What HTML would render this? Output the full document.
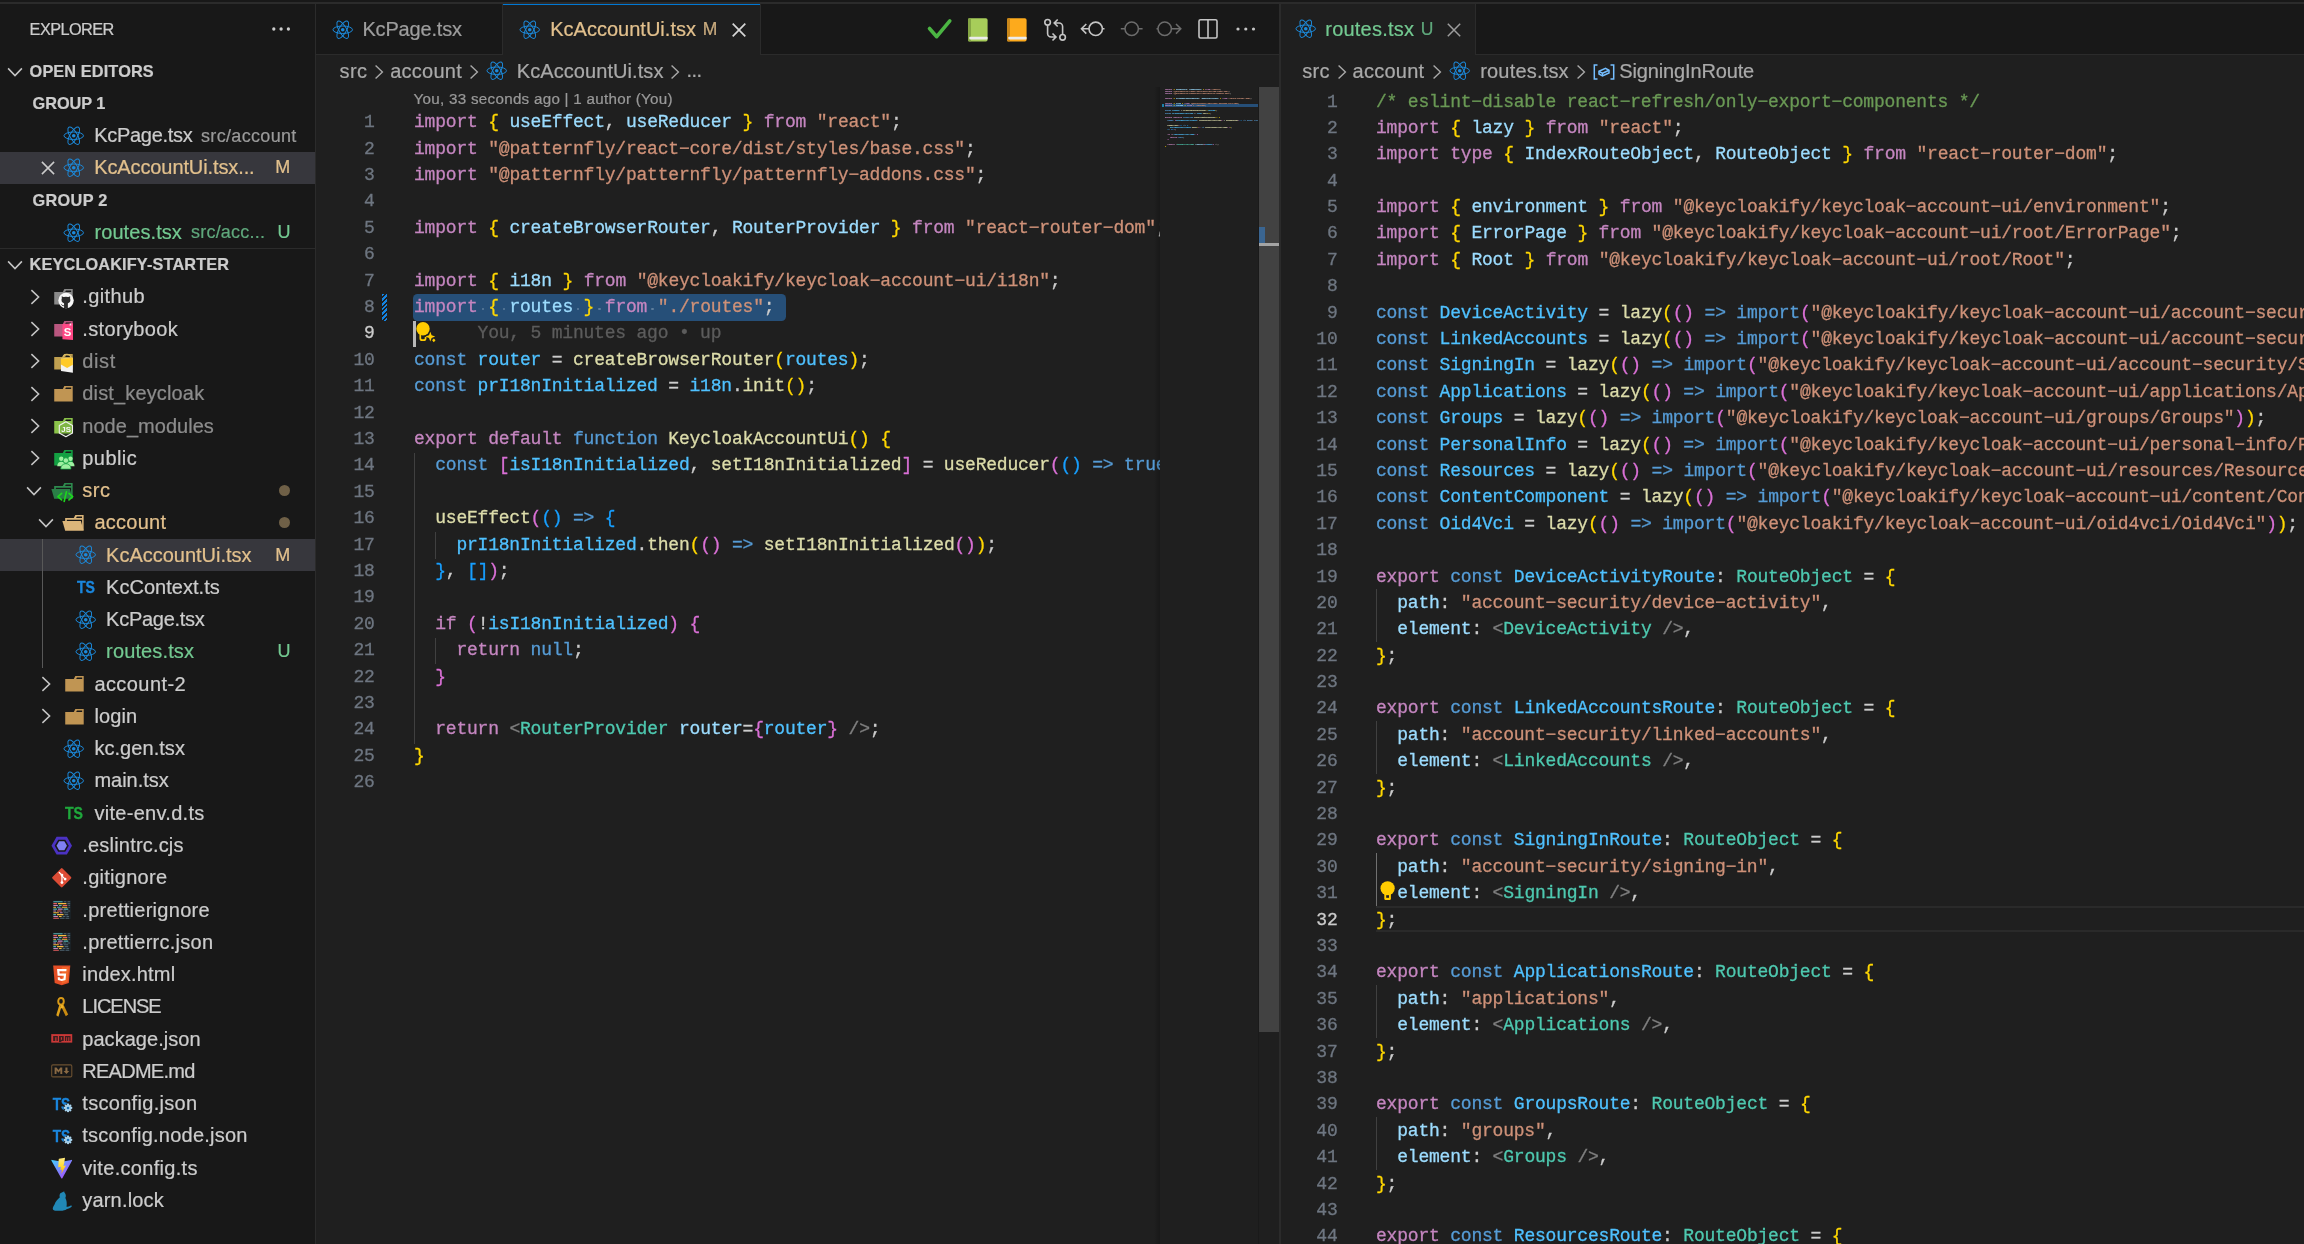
<!DOCTYPE html><html><head><meta charset="utf-8"><title>VS Code</title><style>
*{box-sizing:border-box;margin:0;padding:0}
html,body{width:2304px;height:1244px;overflow:hidden;background:#181818}
body{position:relative;font-family:"Liberation Sans",sans-serif;color:#cccccc;font-size:19px}
i{font-style:normal}
.abs{position:absolute}
.ic{position:absolute;display:block;overflow:visible}
.t{position:absolute;white-space:pre;line-height:32.267px;height:32.267px;-webkit-text-stroke:0.22px}
.b{font-weight:bold}
.code{position:absolute;font-family:"Liberation Mono",monospace;font-size:18px;line-height:26.4062px;white-space:pre;color:#cccccc;letter-spacing:-0.207px;-webkit-text-stroke:0.3px}
.code div{height:26.4062px}
.ln{position:absolute;font-family:"Liberation Mono",monospace;font-size:18px;line-height:26.4062px;text-align:right;color:#6e7681;white-space:pre;letter-spacing:-0.207px;-webkit-text-stroke:0.3px}
.ln div{height:26.4062px}
.ln .act{color:#cccccc}
.kw{color:#c586c0}.st{color:#569cd6}.var{color:#9cdcfe}.cst{color:#4fc1ff}.str{color:#ce9178}.fn{color:#dcdcaa}.type{color:#4ec9b0}.cmt{color:#6a9955}.b0{color:#ffd700}.b1{color:#da70d6}.b2{color:#179fff}.tag{color:#808080}.p{color:#cccccc}</style></head><body><div id="root" style="position:absolute;left:0;top:0;width:2304px;height:1244px;will-change:transform"><div class="abs" style="left:0.00px;top:0.00px;width:2304.00px;height:2.00px;background:#181818;"></div><div class="abs" style="left:0.00px;top:2.00px;width:2304.00px;height:1.50px;background:#2b2b2b;"></div><div class="abs" style="left:0.00px;top:3.50px;width:315.00px;height:1240.50px;background:#181818;"></div><div class="abs" style="left:315.00px;top:3.50px;width:1.00px;height:1240.50px;background:#2b2b2b;"></div><span class="t " id="s_explorer" style="left:29.60px;top:13.27px;font-size:16.30px;color:#cccccc;letter-spacing:-0.561px;">EXPLORER</span><svg class="ic" width="24" height="8" viewBox="0 0 24 8" style="left:270px;top:25.200px"><g fill="#cccccc"><circle cx="3.800" cy="4" r="1.650"/><circle cx="11.100" cy="4" r="1.650"/><circle cx="18.400" cy="4" r="1.650"/></g></svg><svg class="ic" width="24" height="24" viewBox="-12 -12 24 24" style="left:2.90px;top:59.73px"><path d="M-6.90 -3.60 L0.00 3.60 L6.90 -3.60" fill="none" stroke="#c5c5c5" stroke-width="1.55" stroke-linejoin="miter"/></svg><span class="t b" id="s_openeditors" style="left:29.60px;top:54.60px;font-size:16.30px;color:#cccccc;letter-spacing:0.121px;">OPEN EDITORS</span><span class="t b" id="s_group1" style="left:32.60px;top:86.87px;font-size:16.30px;color:#cccccc;letter-spacing:-0.029px;">GROUP 1</span><svg class="ic" viewBox="0 0 32 32" width="23.47" height="23.47" style="left:62.47px;top:123.73px"><g fill="none" stroke="#1c8adb" stroke-width="1.35"><ellipse cx="16" cy="16" rx="13.3" ry="5.1"/><ellipse cx="16" cy="16" rx="13.3" ry="5.1" transform="rotate(60 16 16)"/><ellipse cx="16" cy="16" rx="13.3" ry="5.1" transform="rotate(120 16 16)"/></g><circle cx="16" cy="16" r="2.5" fill="#1c8adb"/></svg><span class="t " id="s_oe_kcpage" style="left:94.20px;top:119.13px;font-size:20.00px;color:#cccccc;letter-spacing:-0.287px;">KcPage.tsx</span><span class="t " id="s_oe_kcpage_d" style="left:201.00px;top:119.63px;font-size:18.00px;color:#9a9a9a;letter-spacing:0.332px;">src/account</span><div class="abs" style="left:0.00px;top:151.60px;width:315.00px;height:32.27px;background:#37373d;"></div><svg class="ic" width="24" height="24" viewBox="-12 -12 24 24" style="left:35.60px;top:156.13px"><path d="M-6.1 -6.1L6.1 6.1M-6.1 6.1L6.1 -6.1" fill="none" stroke="#cccccc" stroke-width="1.50"/></svg><svg class="ic" viewBox="0 0 32 32" width="23.47" height="23.47" style="left:62.47px;top:156.00px"><g fill="none" stroke="#1c8adb" stroke-width="1.35"><ellipse cx="16" cy="16" rx="13.3" ry="5.1"/><ellipse cx="16" cy="16" rx="13.3" ry="5.1" transform="rotate(60 16 16)"/><ellipse cx="16" cy="16" rx="13.3" ry="5.1" transform="rotate(120 16 16)"/></g><circle cx="16" cy="16" r="2.5" fill="#1c8adb"/></svg><span class="t " id="s_oe_kcacc" style="left:94.20px;top:151.40px;font-size:20.00px;color:#e2c08d;letter-spacing:-0.105px;">KcAccountUi.tsx...</span><span class="t " id="s_oe_M" style="left:275.30px;top:151.40px;font-size:18.00px;color:#e2c08d;letter-spacing:0.800px;">M</span><span class="t b" id="s_group2" style="left:32.60px;top:183.67px;font-size:16.30px;color:#cccccc;letter-spacing:0.300px;">GROUP 2</span><svg class="ic" viewBox="0 0 32 32" width="23.47" height="23.47" style="left:62.47px;top:220.53px"><g fill="none" stroke="#1c8adb" stroke-width="1.35"><ellipse cx="16" cy="16" rx="13.3" ry="5.1"/><ellipse cx="16" cy="16" rx="13.3" ry="5.1" transform="rotate(60 16 16)"/><ellipse cx="16" cy="16" rx="13.3" ry="5.1" transform="rotate(120 16 16)"/></g><circle cx="16" cy="16" r="2.5" fill="#1c8adb"/></svg><span class="t " id="s_oe_routes" style="left:94.50px;top:215.94px;font-size:20.00px;color:#73c991;letter-spacing:0.070px;">routes.tsx</span><span class="t " id="s_oe_routes_d" style="left:191.00px;top:216.44px;font-size:18.00px;color:#5fa87c;letter-spacing:0.218px;">src/acc...</span><span class="t " id="s_oe_U" style="left:277.60px;top:215.94px;font-size:18.00px;color:#73c991;letter-spacing:0.500px;">U</span><div class="abs" style="left:0.00px;top:248.20px;width:315.00px;height:1.00px;background:#2b2b2b;"></div><svg class="ic" width="24" height="24" viewBox="-12 -12 24 24" style="left:2.90px;top:253.34px"><path d="M-6.90 -3.60 L0.00 3.60 L6.90 -3.60" fill="none" stroke="#c5c5c5" stroke-width="1.55" stroke-linejoin="miter"/></svg><span class="t b" id="s_proj" style="left:29.60px;top:248.20px;font-size:16.30px;color:#cccccc;letter-spacing:0.143px;">KEYCLOAKIFY-STARTER</span><svg class="ic" width="24" height="24" viewBox="-12 -12 24 24" style="left:22.50px;top:284.80px"><path d="M-3.60 -6.90 L3.60 0.00 L-3.60 6.90" fill="none" stroke="#c5c5c5" stroke-width="1.55" stroke-linejoin="miter"/></svg><svg class="ic" viewBox="0 0 32 32" width="23.47" height="23.47" style="left:50.77px;top:285.07px"><path d="M27.5,5.5H18.2L16.1,9.7H4.4V26.5H29.6V5.5Zm0,4.2H19.3l1.1-2.1h7.1Z" fill="#8a8a8a"/><circle cx="20.500" cy="21.200" r="10.500" fill="#f7f7f7"/><clipPath id="ghc"><circle cx="20.500" cy="21.200" r="10.500"/></clipPath><g fill="#2b2b2b" clip-path="url(#ghc)"><ellipse cx="20.400" cy="20.600" rx="6.100" ry="4.700"/><path d="M14.600 15.400 18.600 17 14.900 20.800Z"/><path d="M26.200 15.400 22.200 17 25.900 20.800Z"/><rect x="17.800" y="23.500" width="5.200" height="9"/><path d="M18 27.800C16.500 28.600 15 28 14.300 26.500" fill="none" stroke="#2b2b2b" stroke-width="1.300"/></g></svg><span class="t " id="tr_0" style="left:82.30px;top:280.47px;font-size:20.00px;color:#cccccc;letter-spacing:0.391px;">.github</span><svg class="ic" width="24" height="24" viewBox="-12 -12 24 24" style="left:22.50px;top:317.07px"><path d="M-3.60 -6.90 L3.60 0.00 L-3.60 6.90" fill="none" stroke="#c5c5c5" stroke-width="1.55" stroke-linejoin="miter"/></svg><svg class="ic" viewBox="0 0 32 32" width="23.47" height="23.47" style="left:50.77px;top:317.33px"><path d="M27.5,5.5H18.2L16.1,9.7H4.4V26.5H29.6V5.5Zm0,4.2H19.3l1.1-2.1h7.1Z" fill="#b9577f"/><path d="M15.6 9.600 30 8.600V31.200L15.600 30.400Z" fill="#ff4785"/><path d="M25.500 9v3.200l1.100-.900 1 .800V8.800z" fill="#ffffff" opacity=".85"/><text x="22.700" y="26.300" font-family="Liberation Sans, sans-serif" font-weight="bold" font-size="15.500" text-anchor="middle" fill="#fff">S</text></svg><span class="t " id="tr_1" style="left:82.30px;top:312.74px;font-size:20.00px;color:#cccccc;letter-spacing:0.353px;">.storybook</span><svg class="ic" width="24" height="24" viewBox="-12 -12 24 24" style="left:22.50px;top:349.34px"><path d="M-3.60 -6.90 L3.60 0.00 L-3.60 6.90" fill="none" stroke="#c5c5c5" stroke-width="1.55" stroke-linejoin="miter"/></svg><svg class="ic" viewBox="0 0 32 32" width="23.47" height="23.47" style="left:50.77px;top:349.60px"><path d="M27.5,5.5H18.2L16.1,9.7H4.4V26.5H29.6V5.5Zm0,4.2H19.3l1.1-2.1h7.1Z" fill="#c0a050"/><path d="M13.600 11.800 29.800 10.500V31L13.600 28.800Z" fill="#f2f2f2"/><path d="M13.600 11.800 29.800 10.500V20L22 24.500 13.600 19.800Z" fill="#ffca28"/><path d="M16 11.600c0-4 2-5.600 5.500-5.600s5.500 1.600 5.500 4.800" fill="none" stroke="#d8b860" stroke-width="1.600"/></svg><span class="t " id="tr_2" style="left:82.30px;top:345.00px;font-size:20.00px;color:#8c8c8c;letter-spacing:0.594px;">dist</span><svg class="ic" width="24" height="24" viewBox="-12 -12 24 24" style="left:22.50px;top:381.60px"><path d="M-3.60 -6.90 L3.60 0.00 L-3.60 6.90" fill="none" stroke="#c5c5c5" stroke-width="1.55" stroke-linejoin="miter"/></svg><svg class="ic" viewBox="0 0 32 32" width="23.47" height="23.47" style="left:50.77px;top:381.87px"><path d="M27.5,5.5H18.2L16.1,9.7H4.4V26.5H29.6V5.5Zm0,4.2H19.3l1.1-2.1h7.1Z" fill="#c09553"/></svg><span class="t " id="tr_3" style="left:82.30px;top:377.27px;font-size:20.00px;color:#8c8c8c;letter-spacing:0.149px;">dist_keycloak</span><svg class="ic" width="24" height="24" viewBox="-12 -12 24 24" style="left:22.50px;top:413.87px"><path d="M-3.60 -6.90 L3.60 0.00 L-3.60 6.90" fill="none" stroke="#c5c5c5" stroke-width="1.55" stroke-linejoin="miter"/></svg><svg class="ic" viewBox="0 0 32 32" width="23.47" height="23.47" style="left:50.77px;top:414.14px"><path d="M27.5,5.5H18.2L16.1,9.7H4.4V26.5H29.6V5.5Zm0,4.2H19.3l1.1-2.1h7.1Z" fill="#8bc34a"/><path d="M20.300 10.500 29.300 15.600V25.800L20.300 31 11.300 25.800V15.600Z" fill="#5d8a34" fill-opacity=".25" stroke="#f0f0f0" stroke-width="1.500" stroke-linejoin="round"/><text x="20.600" y="25" font-family="Liberation Sans, sans-serif" font-weight="bold" font-size="10.800" text-anchor="middle" fill="#f8f8f8">JS</text></svg><span class="t " id="tr_4" style="left:82.30px;top:409.54px;font-size:20.00px;color:#8c8c8c;letter-spacing:0.032px;">node_modules</span><svg class="ic" width="24" height="24" viewBox="-12 -12 24 24" style="left:22.50px;top:446.14px"><path d="M-3.60 -6.90 L3.60 0.00 L-3.60 6.90" fill="none" stroke="#c5c5c5" stroke-width="1.55" stroke-linejoin="miter"/></svg><svg class="ic" viewBox="0 0 32 32" width="23.47" height="23.47" style="left:50.77px;top:446.40px"><path d="M27.5,5.5H18.2L16.1,9.7H4.4V26.5H29.6V5.5Zm0,4.2H19.3l1.1-2.1h7.1Z" fill="#13a042"/><g fill="#9df0a0"><circle cx="14" cy="17.400" r="3"/><circle cx="26.600" cy="17.400" r="3"/><path d="M8.500 27.500c0-4 2.400-6 5.500-6s5.500 2 5.500 6z"/><path d="M21.100 27.500c0-4 2.400-6 5.500-6s5.500 2 5.500 6z"/></g><g fill="#9df0a0" stroke="#13a042" stroke-width="1"><circle cx="20.300" cy="19.800" r="3.700"/><path d="M13.300 31.500c0-5 3-7.300 7-7.300s7 2.300 7 7.300z"/></g></svg><span class="t " id="tr_5" style="left:82.30px;top:441.80px;font-size:20.00px;color:#cccccc;letter-spacing:0.422px;">public</span><svg class="ic" width="24" height="24" viewBox="-12 -12 24 24" style="left:21.90px;top:479.20px"><path d="M-6.90 -3.60 L0.00 3.60 L6.90 -3.60" fill="none" stroke="#c5c5c5" stroke-width="1.55" stroke-linejoin="miter"/></svg><svg class="ic" viewBox="0 0 32 32" width="23.47" height="23.47" style="left:50.77px;top:478.67px"><path d="M27.4,5.5H18.2L16.1,9.7H4.3V26.5H29.5V5.5Zm0,18.7H6.6V11.8H27.4Zm0-14.5H19.2l1-2.1h7.1V9.7Z" fill="#2e8b4e"/><polygon points="25.7,13.7 0.5,13.7 4.3,26.5 29.5,26.5" fill="#2a7f47"/><g fill="none" stroke="#1ed61e" stroke-width="2.300" stroke-linecap="round" stroke-linejoin="round"><path d="M14.500 19.500 9.500 24 14.500 28.500"/><path d="M24.500 19.500 29.500 24 24.500 28.500"/><path d="M21 17.500 18 30.500"/></g></svg><span class="t " id="tr_6" style="left:82.30px;top:474.07px;font-size:20.00px;color:#e2c08d;letter-spacing:0.509px;">src</span><div class="abs" style="left:278.50px;top:484.90px;width:11.00px;height:11.00px;background:#6f6047;border-radius:50%"></div><svg class="ic" width="24" height="24" viewBox="-12 -12 24 24" style="left:33.60px;top:511.47px"><path d="M-6.90 -3.60 L0.00 3.60 L6.90 -3.60" fill="none" stroke="#c5c5c5" stroke-width="1.55" stroke-linejoin="miter"/></svg><svg class="ic" viewBox="0 0 32 32" width="23.47" height="23.47" style="left:62.47px;top:510.94px"><path d="M27.4,5.5H18.2L16.1,9.7H4.3V26.5H29.5V5.5Zm0,18.7H6.6V11.8H27.4Zm0-14.5H19.2l1-2.1h7.1V9.7Z" fill="#dcb67a"/><polygon points="25.7,13.7 0.5,13.7 4.3,26.5 29.5,26.5" fill="#dcb67a"/></svg><span class="t " id="tr_7" style="left:94.40px;top:506.34px;font-size:20.00px;color:#e2c08d;letter-spacing:0.263px;">account</span><div class="abs" style="left:278.50px;top:517.17px;width:11.00px;height:11.00px;background:#6f6047;border-radius:50%"></div><div class="abs" style="left:0.00px;top:538.81px;width:315.00px;height:32.27px;background:#37373d;"></div><svg class="ic" viewBox="0 0 32 32" width="23.47" height="23.47" style="left:74.17px;top:543.20px"><g fill="none" stroke="#1c8adb" stroke-width="1.35"><ellipse cx="16" cy="16" rx="13.3" ry="5.1"/><ellipse cx="16" cy="16" rx="13.3" ry="5.1" transform="rotate(60 16 16)"/><ellipse cx="16" cy="16" rx="13.3" ry="5.1" transform="rotate(120 16 16)"/></g><circle cx="16" cy="16" r="2.5" fill="#1c8adb"/></svg><span class="t " id="tr_8" style="left:106.10px;top:538.60px;font-size:20.00px;color:#e2c08d;letter-spacing:-0.014px;">KcAccountUi.tsx</span><span class="t " style="left:275.30px;top:538.60px;font-size:18.00px;color:#e2c08d;letter-spacing:0.800px;">M</span><svg class="ic" viewBox="0 0 32 32" width="23.47" height="23.47" style="left:74.17px;top:575.47px"><text x="16.300" y="24.200" font-family="Liberation Sans, sans-serif" font-weight="bold" font-size="21.500" text-anchor="middle" textLength="24.500" lengthAdjust="spacingAndGlyphs" fill="#1a86dd" stroke="#1a86dd" stroke-width=".5">TS</text></svg><span class="t " id="tr_9" style="left:106.10px;top:570.87px;font-size:20.00px;color:#cccccc;letter-spacing:0.026px;">KcContext.ts</span><svg class="ic" viewBox="0 0 32 32" width="23.47" height="23.47" style="left:74.17px;top:607.74px"><g fill="none" stroke="#1c8adb" stroke-width="1.35"><ellipse cx="16" cy="16" rx="13.3" ry="5.1"/><ellipse cx="16" cy="16" rx="13.3" ry="5.1" transform="rotate(60 16 16)"/><ellipse cx="16" cy="16" rx="13.3" ry="5.1" transform="rotate(120 16 16)"/></g><circle cx="16" cy="16" r="2.5" fill="#1c8adb"/></svg><span class="t " id="tr_10" style="left:106.10px;top:603.14px;font-size:20.00px;color:#cccccc;letter-spacing:-0.267px;">KcPage.tsx</span><svg class="ic" viewBox="0 0 32 32" width="23.47" height="23.47" style="left:74.17px;top:640.00px"><g fill="none" stroke="#1c8adb" stroke-width="1.35"><ellipse cx="16" cy="16" rx="13.3" ry="5.1"/><ellipse cx="16" cy="16" rx="13.3" ry="5.1" transform="rotate(60 16 16)"/><ellipse cx="16" cy="16" rx="13.3" ry="5.1" transform="rotate(120 16 16)"/></g><circle cx="16" cy="16" r="2.5" fill="#1c8adb"/></svg><span class="t " id="tr_11" style="left:106.10px;top:635.41px;font-size:20.00px;color:#73c991;letter-spacing:0.130px;">routes.tsx</span><span class="t " style="left:277.60px;top:635.41px;font-size:18.00px;color:#73c991;letter-spacing:0.500px;">U</span><svg class="ic" width="24" height="24" viewBox="-12 -12 24 24" style="left:34.20px;top:672.01px"><path d="M-3.60 -6.90 L3.60 0.00 L-3.60 6.90" fill="none" stroke="#c5c5c5" stroke-width="1.55" stroke-linejoin="miter"/></svg><svg class="ic" viewBox="0 0 32 32" width="23.47" height="23.47" style="left:62.47px;top:672.27px"><path d="M27.5,5.5H18.2L16.1,9.7H4.4V26.5H29.6V5.5Zm0,4.2H19.3l1.1-2.1h7.1Z" fill="#c09553"/></svg><span class="t " id="tr_12" style="left:94.40px;top:667.67px;font-size:20.00px;color:#cccccc;letter-spacing:0.428px;">account-2</span><svg class="ic" width="24" height="24" viewBox="-12 -12 24 24" style="left:34.20px;top:704.27px"><path d="M-3.60 -6.90 L3.60 0.00 L-3.60 6.90" fill="none" stroke="#c5c5c5" stroke-width="1.55" stroke-linejoin="miter"/></svg><svg class="ic" viewBox="0 0 32 32" width="23.47" height="23.47" style="left:62.47px;top:704.54px"><path d="M27.5,5.5H18.2L16.1,9.7H4.4V26.5H29.6V5.5Zm0,4.2H19.3l1.1-2.1h7.1Z" fill="#c09553"/></svg><span class="t " id="tr_13" style="left:94.40px;top:699.94px;font-size:20.00px;color:#cccccc;letter-spacing:0.147px;">login</span><svg class="ic" viewBox="0 0 32 32" width="23.47" height="23.47" style="left:62.47px;top:736.81px"><g fill="none" stroke="#1c8adb" stroke-width="1.35"><ellipse cx="16" cy="16" rx="13.3" ry="5.1"/><ellipse cx="16" cy="16" rx="13.3" ry="5.1" transform="rotate(60 16 16)"/><ellipse cx="16" cy="16" rx="13.3" ry="5.1" transform="rotate(120 16 16)"/></g><circle cx="16" cy="16" r="2.5" fill="#1c8adb"/></svg><span class="t " id="tr_14" style="left:94.40px;top:732.21px;font-size:20.00px;color:#cccccc;letter-spacing:0.055px;">kc.gen.tsx</span><svg class="ic" viewBox="0 0 32 32" width="23.47" height="23.47" style="left:62.47px;top:769.07px"><g fill="none" stroke="#1c8adb" stroke-width="1.35"><ellipse cx="16" cy="16" rx="13.3" ry="5.1"/><ellipse cx="16" cy="16" rx="13.3" ry="5.1" transform="rotate(60 16 16)"/><ellipse cx="16" cy="16" rx="13.3" ry="5.1" transform="rotate(120 16 16)"/></g><circle cx="16" cy="16" r="2.5" fill="#1c8adb"/></svg><span class="t " id="tr_15" style="left:94.40px;top:764.47px;font-size:20.00px;color:#cccccc;letter-spacing:-0.009px;">main.tsx</span><svg class="ic" viewBox="0 0 32 32" width="23.47" height="23.47" style="left:62.47px;top:801.34px"><text x="16.300" y="24.200" font-family="Liberation Sans, sans-serif" font-weight="bold" font-size="21.500" text-anchor="middle" textLength="24.500" lengthAdjust="spacingAndGlyphs" fill="#1fa83c" stroke="#1fa83c" stroke-width=".5">TS</text></svg><span class="t " id="tr_16" style="left:94.40px;top:796.74px;font-size:20.00px;color:#cccccc;letter-spacing:0.297px;">vite-env.d.ts</span><svg class="ic" viewBox="0 0 32 32" width="23.47" height="23.47" style="left:50.47px;top:833.61px"><path d="M2 16 9 3.900H23L30 16 23 28.100H9Z" fill="#4b32c3"/><path d="M6.400 16 11.200 7.700H20.800L25.600 16 20.800 24.300H11.200Z" fill="#181818"/><path d="M8.900 16 12.450 9.850H19.550L23.100 16 19.550 22.150H12.450Z" fill="#8080f2"/></svg><span class="t " id="tr_17" style="left:82.30px;top:829.01px;font-size:20.00px;color:#cccccc;letter-spacing:0.192px;">.eslintrc.cjs</span><svg class="ic" viewBox="0 0 32 32" width="23.47" height="23.47" style="left:50.47px;top:865.87px"><rect x="6.300" y="6.300" width="19.400" height="19.400" rx="1.500" transform="rotate(45 16 16)" fill="#dd4c35"/><g stroke="#fff" stroke-width="1.700" fill="none" stroke-linecap="round"><path d="M12.600 8.800 16.300 12.500V22.500"/><path d="M16.300 13.500 20.300 17.500"/></g><g fill="#fff"><circle cx="16.300" cy="12.300" r="1.900"/><circle cx="16.300" cy="22.600" r="1.900"/><circle cx="20.600" cy="17.800" r="1.900"/></g></svg><span class="t " id="tr_18" style="left:82.30px;top:861.27px;font-size:20.00px;color:#cccccc;letter-spacing:0.272px;">.gitignore</span><svg class="ic" viewBox="0 0 32 32" width="23.47" height="23.47" style="left:50.47px;top:898.14px"><rect x="3.600" y="3.400" width="25" height="25.400" fill="#1e2a31" opacity=".55"/><rect x="4.4" y="4.4" width="13.0" height="1.500" rx=".7" fill="#56b3b4"/><rect x="18.6" y="4.4" width="3.9" height="1.500" rx=".7" fill="#4d616e"/><rect x="23.7" y="4.4" width="3.9" height="1.500" rx=".7" fill="#4d616e"/><rect x="4.4" y="6.9" width="5.2" height="1.500" rx=".7" fill="#ea5e5e"/><rect x="10.8" y="6.9" width="11.7" height="1.500" rx=".7" fill="#f7ba3e"/><rect x="23.7" y="6.9" width="3.9" height="1.500" rx=".7" fill="#4d616e"/><rect x="4.4" y="9.4" width="6.5" height="1.500" rx=".7" fill="#bf85bf"/><rect x="12.1" y="9.4" width="3.9" height="1.500" rx=".7" fill="#56b3b4"/><rect x="17.2" y="9.4" width="6.5" height="1.500" rx=".7" fill="#ea5e5e"/><rect x="24.9" y="9.4" width="2.6" height="1.500" rx=".7" fill="#4d616e"/><rect x="4.4" y="11.9" width="3.9" height="1.500" rx=".7" fill="#f7ba3e"/><rect x="9.5" y="11.9" width="5.2" height="1.500" rx=".7" fill="#56b3b4"/><rect x="15.9" y="11.9" width="7.8" height="1.500" rx=".7" fill="#f7ba3e"/><rect x="24.9" y="11.9" width="2.6" height="1.500" rx=".7" fill="#4d616e"/><rect x="4.4" y="14.4" width="5.2" height="1.500" rx=".7" fill="#56b3b4"/><rect x="10.8" y="14.4" width="6.5" height="1.500" rx=".7" fill="#bf85bf"/><rect x="18.5" y="14.4" width="6.5" height="1.500" rx=".7" fill="#56b3b4"/><rect x="4.4" y="16.9" width="3.9" height="1.500" rx=".7" fill="#bf85bf"/><rect x="9.5" y="16.9" width="6.5" height="1.500" rx=".7" fill="#ea5e5e"/><rect x="17.2" y="16.9" width="5.2" height="1.500" rx=".7" fill="#4d616e"/><rect x="23.6" y="16.9" width="3.9" height="1.500" rx=".7" fill="#4d616e"/><rect x="4.4" y="19.4" width="7.8" height="1.500" rx=".7" fill="#f7ba3e"/><rect x="13.4" y="19.4" width="3.9" height="1.500" rx=".7" fill="#bf85bf"/><rect x="18.5" y="19.4" width="6.5" height="1.500" rx=".7" fill="#4d616e"/><rect x="4.4" y="21.9" width="3.9" height="1.500" rx=".7" fill="#56b3b4"/><rect x="9.5" y="21.9" width="9.1" height="1.500" rx=".7" fill="#f7ba3e"/><rect x="19.8" y="21.9" width="5.2" height="1.500" rx=".7" fill="#4d616e"/><rect x="4.4" y="24.4" width="6.5" height="1.500" rx=".7" fill="#bf85bf"/><rect x="12.1" y="24.4" width="3.9" height="1.500" rx=".7" fill="#f7ba3e"/><rect x="17.2" y="24.4" width="3.9" height="1.500" rx=".7" fill="#4d616e"/><rect x="22.3" y="24.4" width="3.9" height="1.500" rx=".7" fill="#4d616e"/><rect x="4.4" y="26.9" width="7.8" height="1.500" rx=".7" fill="#ea5e5e"/><rect x="13.4" y="26.9" width="6.5" height="1.500" rx=".7" fill="#4d616e"/><rect x="21.1" y="26.9" width="5.2" height="1.500" rx=".7" fill="#4d616e"/></svg><span class="t " id="tr_19" style="left:82.30px;top:893.54px;font-size:20.00px;color:#cccccc;letter-spacing:0.280px;">.prettierignore</span><svg class="ic" viewBox="0 0 32 32" width="23.47" height="23.47" style="left:50.47px;top:930.41px"><rect x="3.600" y="3.400" width="25" height="25.400" fill="#1e2a31" opacity=".55"/><rect x="4.4" y="4.4" width="13.0" height="1.500" rx=".7" fill="#56b3b4"/><rect x="18.6" y="4.4" width="3.9" height="1.500" rx=".7" fill="#4d616e"/><rect x="23.7" y="4.4" width="3.9" height="1.500" rx=".7" fill="#4d616e"/><rect x="4.4" y="6.9" width="5.2" height="1.500" rx=".7" fill="#ea5e5e"/><rect x="10.8" y="6.9" width="11.7" height="1.500" rx=".7" fill="#f7ba3e"/><rect x="23.7" y="6.9" width="3.9" height="1.500" rx=".7" fill="#4d616e"/><rect x="4.4" y="9.4" width="6.5" height="1.500" rx=".7" fill="#bf85bf"/><rect x="12.1" y="9.4" width="3.9" height="1.500" rx=".7" fill="#56b3b4"/><rect x="17.2" y="9.4" width="6.5" height="1.500" rx=".7" fill="#ea5e5e"/><rect x="24.9" y="9.4" width="2.6" height="1.500" rx=".7" fill="#4d616e"/><rect x="4.4" y="11.9" width="3.9" height="1.500" rx=".7" fill="#f7ba3e"/><rect x="9.5" y="11.9" width="5.2" height="1.500" rx=".7" fill="#56b3b4"/><rect x="15.9" y="11.9" width="7.8" height="1.500" rx=".7" fill="#f7ba3e"/><rect x="24.9" y="11.9" width="2.6" height="1.500" rx=".7" fill="#4d616e"/><rect x="4.4" y="14.4" width="5.2" height="1.500" rx=".7" fill="#56b3b4"/><rect x="10.8" y="14.4" width="6.5" height="1.500" rx=".7" fill="#bf85bf"/><rect x="18.5" y="14.4" width="6.5" height="1.500" rx=".7" fill="#56b3b4"/><rect x="4.4" y="16.9" width="3.9" height="1.500" rx=".7" fill="#bf85bf"/><rect x="9.5" y="16.9" width="6.5" height="1.500" rx=".7" fill="#ea5e5e"/><rect x="17.2" y="16.9" width="5.2" height="1.500" rx=".7" fill="#4d616e"/><rect x="23.6" y="16.9" width="3.9" height="1.500" rx=".7" fill="#4d616e"/><rect x="4.4" y="19.4" width="7.8" height="1.500" rx=".7" fill="#f7ba3e"/><rect x="13.4" y="19.4" width="3.9" height="1.500" rx=".7" fill="#bf85bf"/><rect x="18.5" y="19.4" width="6.5" height="1.500" rx=".7" fill="#4d616e"/><rect x="4.4" y="21.9" width="3.9" height="1.500" rx=".7" fill="#56b3b4"/><rect x="9.5" y="21.9" width="9.1" height="1.500" rx=".7" fill="#f7ba3e"/><rect x="19.8" y="21.9" width="5.2" height="1.500" rx=".7" fill="#4d616e"/><rect x="4.4" y="24.4" width="6.5" height="1.500" rx=".7" fill="#bf85bf"/><rect x="12.1" y="24.4" width="3.9" height="1.500" rx=".7" fill="#f7ba3e"/><rect x="17.2" y="24.4" width="3.9" height="1.500" rx=".7" fill="#4d616e"/><rect x="22.3" y="24.4" width="3.9" height="1.500" rx=".7" fill="#4d616e"/><rect x="4.4" y="26.9" width="7.8" height="1.500" rx=".7" fill="#ea5e5e"/><rect x="13.4" y="26.9" width="6.5" height="1.500" rx=".7" fill="#4d616e"/><rect x="21.1" y="26.9" width="5.2" height="1.500" rx=".7" fill="#4d616e"/></svg><span class="t " id="tr_20" style="left:82.30px;top:925.81px;font-size:20.00px;color:#cccccc;letter-spacing:0.274px;">.prettierrc.json</span><svg class="ic" viewBox="0 0 32 32" width="23.47" height="23.47" style="left:50.47px;top:962.67px"><path d="M4.300 3.300H27.700L25.600 27.400 16 30.200 6.400 27.400Z" fill="#e44f26"/><path d="M16 5.300V28.200L23.800 25.900 25.600 5.300Z" fill="#f1662a"/><path d="M9.600 8.300H22.600L22.300 11.300H12.900L13.150 14.300H22L21.200 23.200 16 24.700 10.800 23.200 10.500 19.300H13.400L13.550 21 16 21.700 18.500 21 18.800 17.300H10.400Z" fill="#fff"/></svg><span class="t " id="tr_21" style="left:82.30px;top:958.08px;font-size:20.00px;color:#cccccc;letter-spacing:0.184px;">index.html</span><svg class="ic" viewBox="0 0 32 32" width="23.47" height="23.47" style="left:50.47px;top:994.94px"><g fill="none" stroke="#d99a16" stroke-width="2.600"><ellipse cx="15" cy="8.600" rx="3.800" ry="4.600"/></g><path d="M13 12.500 8.500 27.500 11.500 29.500 15.200 17.500Z" fill="#e0a21a"/><path d="M15 12.500 17.800 12 24.800 26.500 21.500 29 16.300 18Z" fill="#c98a10"/><path d="M13.800 13.200 17.200 13 19 17 14.800 18.500Z" fill="#f0b429"/></svg><span class="t " id="tr_22" style="left:82.30px;top:990.34px;font-size:20.00px;color:#cccccc;letter-spacing:-1.028px;">LICENSE</span><svg class="ic" viewBox="0 0 32 32" width="23.47" height="23.47" style="left:50.47px;top:1027.21px"><rect x="1.700" y="9.700" width="28.600" height="11.600" fill="#cb3837"/><g fill="#181818"><path d="M4.300 12.300H10.700V19H8.800V14.100H7.200V19H4.300Z" opacity=".8"/><path d="M12.300 12.300H18.700V19H15.500V20.400H12.300ZM14.800 14.100V17.300H16.300V14.100Z" opacity=".8"/><path d="M20.300 12.300H28V19H26.300V14.100H25V19H23.300V14.100H22.200V19H20.300Z" opacity=".8"/></g></svg><span class="t " id="tr_23" style="left:82.30px;top:1022.61px;font-size:20.00px;color:#cccccc;letter-spacing:0.035px;">package.json</span><svg class="ic" viewBox="0 0 32 32" width="23.47" height="23.47" style="left:50.47px;top:1059.48px"><rect x="2.300" y="8" width="27.400" height="16.400" rx="1.600" fill="none" stroke="#6b5030" stroke-width="1.500"/><path d="M6.300 20.500V11.700H8.900L11.500 15 14.100 11.700H16.700V20.500H14.100V15.500L11.500 18.700 8.900 15.500V20.500Z" fill="#8a6a44"/><path d="M22.400 20.600 18.500 16.200H21V11.700H23.800V16.200H26.300Z" fill="#8a6a44"/></svg><span class="t " id="tr_24" style="left:82.30px;top:1054.88px;font-size:20.00px;color:#cccccc;letter-spacing:-0.734px;">README.md</span><svg class="ic" viewBox="0 0 32 32" width="23.47" height="23.47" style="left:50.47px;top:1091.74px"><text x="15.700" y="24.300" font-family="Liberation Sans, sans-serif" font-weight="bold" font-size="22.500" text-anchor="middle" textLength="24" lengthAdjust="spacingAndGlyphs" fill="#1a86dd" stroke="#1a86dd" stroke-width=".5">TS</text><circle cx="24.600" cy="21.800" r="6" fill="#181818"/><g fill="#a9d4ef"><circle cx="29.00" cy="21.80" r="1.55"/><circle cx="27.71" cy="24.91" r="1.55"/><circle cx="24.60" cy="26.20" r="1.55"/><circle cx="21.49" cy="24.91" r="1.55"/><circle cx="20.20" cy="21.80" r="1.55"/><circle cx="21.49" cy="18.69" r="1.55"/><circle cx="24.60" cy="17.40" r="1.55"/><circle cx="27.71" cy="18.69" r="1.55"/><circle cx="24.60" cy="21.80" r="4.05"/></g><circle cx="24.60" cy="21.80" r="1.85" fill="#1a6fb5"/></svg><span class="t " id="tr_25" style="left:82.30px;top:1087.14px;font-size:20.00px;color:#cccccc;letter-spacing:0.302px;">tsconfig.json</span><svg class="ic" viewBox="0 0 32 32" width="23.47" height="23.47" style="left:50.47px;top:1124.01px"><text x="15.700" y="24.300" font-family="Liberation Sans, sans-serif" font-weight="bold" font-size="22.500" text-anchor="middle" textLength="24" lengthAdjust="spacingAndGlyphs" fill="#1a86dd" stroke="#1a86dd" stroke-width=".5">TS</text><circle cx="24.600" cy="21.800" r="6" fill="#181818"/><g fill="#a9d4ef"><circle cx="29.00" cy="21.80" r="1.55"/><circle cx="27.71" cy="24.91" r="1.55"/><circle cx="24.60" cy="26.20" r="1.55"/><circle cx="21.49" cy="24.91" r="1.55"/><circle cx="20.20" cy="21.80" r="1.55"/><circle cx="21.49" cy="18.69" r="1.55"/><circle cx="24.60" cy="17.40" r="1.55"/><circle cx="27.71" cy="18.69" r="1.55"/><circle cx="24.60" cy="21.80" r="4.05"/></g><circle cx="24.60" cy="21.80" r="1.85" fill="#1a6fb5"/></svg><span class="t " id="tr_26" style="left:82.30px;top:1119.41px;font-size:20.00px;color:#cccccc;letter-spacing:0.231px;">tsconfig.node.json</span><svg class="ic" viewBox="0 0 32 32" width="23.47" height="23.47" style="left:50.47px;top:1156.28px"><defs><linearGradient id="vg" x1="0" y1="0" x2="1" y2="1"><stop offset="0" stop-color="#41d1ff"/><stop offset="1" stop-color="#bd34fe"/></linearGradient><linearGradient id="vy" x1="0" y1="0" x2="0" y2="1"><stop offset="0" stop-color="#ffea83"/><stop offset=".5" stop-color="#ffdd35"/><stop offset="1" stop-color="#ffa800"/></linearGradient></defs><path d="M2 6.500 15.400 30.300a.800.800 0 0 0 1.400 0L30 6.500a.800.800 0 0 0-.900-1.200L16.400 7.700 2.900 5.300A.800.800 0 0 0 2 6.500Z" fill="url(#vg)"/><path d="M20.500 2.300 12.300 3.900a.500.500 0 0 0-.400.500l-.700 10.500a.500.500 0 0 0 .600.500l3-.700-.800 4.300 2.500-.600-1.200 6 6.400-11.500-3.300.700 1.100-4.800Z" fill="url(#vy)"/></svg><span class="t " id="tr_27" style="left:82.30px;top:1151.68px;font-size:20.00px;color:#cccccc;letter-spacing:0.309px;">vite.config.ts</span><svg class="ic" viewBox="0 0 32 32" width="23.47" height="23.47" style="left:50.47px;top:1188.54px"><g fill="#2188b6"><path d="M19.300 3.200 20.600 8.500 14.800 8.500 15.600 5.500Z"/><ellipse cx="17.300" cy="9.300" rx="4.300" ry="4.600"/><path d="M14 11C11 13.500 7.500 17 6 21.500C4.500 23.500 3.300 26 4 28C5 30 9 30 13 29.500C17 29.800 20.500 29 22.500 27.500C25 27 27.800 25.800 29.800 23.800L29 22C26.500 23.500 24.500 24.300 22.500 24.300C23.300 20 22.800 15.500 20.800 12Z"/></g></svg><span class="t " id="tr_28" style="left:82.30px;top:1183.95px;font-size:20.00px;color:#cccccc;letter-spacing:0.174px;">yarn.lock</span><div class="abs" style="left:41.60px;top:538.81px;width:1.40px;height:129.07px;background:#585858;"></div><div class="abs" style="left:316.00px;top:3.50px;width:1988.00px;height:1240.50px;background:#1f1f1f;"></div><div class="abs" style="left:316.00px;top:3.50px;width:1988.00px;height:51.30px;background:#181818;"></div><div class="abs" style="left:316.00px;top:53.80px;width:1988.00px;height:1.00px;background:#2b2b2b;"></div><div class="abs" style="left:502.30px;top:3.50px;width:1.00px;height:51.30px;background:#2b2b2b;"></div><svg class="ic" viewBox="0 0 32 32" width="23.47" height="23.47" style="left:330.87px;top:17.57px"><g fill="none" stroke="#1c8adb" stroke-width="1.35"><ellipse cx="16" cy="16" rx="13.3" ry="5.1"/><ellipse cx="16" cy="16" rx="13.3" ry="5.1" transform="rotate(60 16 16)"/><ellipse cx="16" cy="16" rx="13.3" ry="5.1" transform="rotate(120 16 16)"/></g><circle cx="16" cy="16" r="2.5" fill="#1c8adb"/></svg><span class="t " id="tab1" style="left:362.40px;top:12.97px;font-size:20.00px;color:#9d9d9d;letter-spacing:-0.177px;">KcPage.tsx</span><div class="abs" style="left:503.30px;top:3.50px;width:256.40px;height:51.30px;background:#1f1f1f;"></div><div class="abs" style="left:503.30px;top:3.70px;width:256.40px;height:1.50px;background:#0078d4;"></div><div class="abs" style="left:759.70px;top:3.50px;width:1.00px;height:51.30px;background:#2b2b2b;"></div><svg class="ic" viewBox="0 0 32 32" width="23.47" height="23.47" style="left:518.26px;top:17.57px"><g fill="none" stroke="#1c8adb" stroke-width="1.35"><ellipse cx="16" cy="16" rx="13.3" ry="5.1"/><ellipse cx="16" cy="16" rx="13.3" ry="5.1" transform="rotate(60 16 16)"/><ellipse cx="16" cy="16" rx="13.3" ry="5.1" transform="rotate(120 16 16)"/></g><circle cx="16" cy="16" r="2.5" fill="#1c8adb"/></svg><span class="t " id="tab2" style="left:550.20px;top:12.97px;font-size:20.00px;color:#e2c08d;letter-spacing:0.013px;">KcAccountUi.tsx</span><span class="t " id="tab2M" style="left:702.80px;top:13.27px;font-size:17.50px;color:#c9ab7e;letter-spacing:1.422px;">M</span><svg class="ic" width="24" height="24" viewBox="-12 -12 24 24" style="left:727.20px;top:17.60px"><path d="M-6.3 -6.3L6.3 6.3M-6.3 6.3L6.3 -6.3" fill="none" stroke="#d6d6d6" stroke-width="1.70"/></svg><svg class="ic" width="30" height="30" viewBox="0 0 30 30" style="left:925px;top:14px"><path d="M4.500 14.500 11.700 22.700 24.800 6.800" fill="none" stroke="#4bb543" stroke-width="3.600" stroke-linecap="round" stroke-linejoin="round"/></svg><svg class="ic" width="22" height="26" viewBox="0 0 22 26" style="left:967.0px;top:16.500px"><rect x="1" y="1.300" width="19.600" height="23.200" rx="1.800" fill="#a7cd5a"/><rect x="1" y="1.300" width="3" height="23.200" rx="1" fill="#84a544"/><rect x="2.300" y="19.800" width="18.300" height="2.800" rx=".8" fill="#ececec"/></svg><svg class="ic" width="22" height="26" viewBox="0 0 22 26" style="left:1005.5px;top:16.500px"><rect x="1" y="1.300" width="19.600" height="23.200" rx="1.800" fill="#fdaa1c"/><rect x="1" y="1.300" width="3" height="23.200" rx="1" fill="#c9871a"/><rect x="2.300" y="19.800" width="18.300" height="2.800" rx=".8" fill="#ececec"/></svg><svg class="ic" width="26" height="26" viewBox="0 0 26 26" style="left:1041.500px;top:17px"><g fill="none" stroke="#c5c5c5" stroke-width="1.600"><circle cx="5.600" cy="5.300" r="2.800"/><circle cx="20.600" cy="20.300" r="2.800"/><path d="M5.600 8.200V16.500a3.500 3.500 0 0 0 3.500 3.500H13.500M10.500 16.500 14 20 10.500 23.500"/><path d="M20.600 17.400V9.500a3.500 3.500 0 0 0-3.500-3.500H12.700M15.700 2.500 12.200 6 15.700 9.500"/></g></svg><svg class="ic" width="30" height="26" viewBox="0 0 30 26" style="left:1078px;top:16px"><g fill="none" stroke="#c5c5c5" stroke-width="1.600"><circle cx="17.700" cy="12.800" r="6.700"/><path d="M11 12.800H3.800M8.300 8 3.500 12.800 8.300 17.600M24.400 12.800H26.500"/></g></svg><svg class="ic" width="30" height="26" viewBox="0 0 30 26" style="left:1117px;top:16px"><g fill="none" stroke="#6c6c6c" stroke-width="1.500"><circle cx="14.700" cy="12.800" r="6.700"/><path d="M8 12.800H3.800M21.400 12.800H25.600"/></g></svg><svg class="ic" width="30" height="26" viewBox="0 0 30 26" style="left:1154px;top:16px"><g fill="none" stroke="#6c6c6c" stroke-width="1.500"><circle cx="10.700" cy="12.800" r="6.700"/><path d="M17.400 12.800H26.500M22 8 26.800 12.800 22 17.600M4 12.800H2.500"/></g></svg><svg class="ic" width="24" height="24" viewBox="0 0 24 24" style="left:1195.500px;top:17px"><g fill="none" stroke="#c5c5c5" stroke-width="1.600"><rect x="3" y="2.800" width="18" height="18.200" rx="1.500"/><path d="M12 2.800V21"/></g></svg><svg class="ic" width="24" height="8" viewBox="0 0 24 8" style="left:1233.500px;top:25.200px"><g fill="#c5c5c5"><circle cx="4" cy="4" r="1.600"/><circle cx="11.800" cy="4" r="1.600"/><circle cx="19.500" cy="4" r="1.600"/></g></svg><span class="t " id="bc1_src" style="left:339.60px;top:54.67px;font-size:20.00px;color:#a9a9a9;letter-spacing:0.376px;">src</span><svg class="ic" width="24" height="24" viewBox="-12 -12 24 24" style="left:366.70px;top:59.50px"><path d="M-3.42 -6.55 L3.42 0.00 L-3.42 6.55" fill="none" stroke="#a9a9a9" stroke-width="1.40" stroke-linejoin="miter"/></svg><span class="t " id="bc1_account" style="left:390.20px;top:54.67px;font-size:20.00px;color:#a9a9a9;letter-spacing:0.263px;">account</span><svg class="ic" width="24" height="24" viewBox="-12 -12 24 24" style="left:461.70px;top:59.50px"><path d="M-3.42 -6.55 L3.42 0.00 L-3.42 6.55" fill="none" stroke="#a9a9a9" stroke-width="1.40" stroke-linejoin="miter"/></svg><svg class="ic" viewBox="0 0 32 32" width="23.47" height="23.47" style="left:485.26px;top:59.27px"><g fill="none" stroke="#1c8adb" stroke-width="1.35"><ellipse cx="16" cy="16" rx="13.3" ry="5.1"/><ellipse cx="16" cy="16" rx="13.3" ry="5.1" transform="rotate(60 16 16)"/><ellipse cx="16" cy="16" rx="13.3" ry="5.1" transform="rotate(120 16 16)"/></g><circle cx="16" cy="16" r="2.5" fill="#1c8adb"/></svg><span class="t " id="bc1_file" style="left:516.80px;top:54.67px;font-size:20.00px;color:#a9a9a9;letter-spacing:0.073px;">KcAccountUi.tsx</span><svg class="ic" width="24" height="24" viewBox="-12 -12 24 24" style="left:663.00px;top:59.50px"><path d="M-3.42 -6.55 L3.42 0.00 L-3.42 6.55" fill="none" stroke="#a9a9a9" stroke-width="1.40" stroke-linejoin="miter"/></svg><span class="t " id="bc1_dots" style="left:686.60px;top:54.17px;font-size:20.00px;color:#a9a9a9;letter-spacing:-0.591px;">...</span><span class="t " id="codelens" style="left:413.60px;top:88.30px;font-size:15.20px;color:#999999;letter-spacing:0.275px;line-height:22.00px;height:22.00px;">You, 33 seconds ago | 1 author (You)</span><div class="abs" style="left:413.10px;top:293.94px;width:373.13px;height:27.11px;background:#264f78;border-radius:4.500px"></div><div class="abs" style="left:481.67px;top:307.65px;width:2.40px;height:2.40px;background:#5d7d9c;border-radius:50%"></div><div class="abs" style="left:502.86px;top:307.65px;width:2.40px;height:2.40px;background:#5d7d9c;border-radius:50%"></div><div class="abs" style="left:577.02px;top:307.65px;width:2.40px;height:2.40px;background:#5d7d9c;border-radius:50%"></div><div class="abs" style="left:598.21px;top:307.65px;width:2.40px;height:2.40px;background:#5d7d9c;border-radius:50%"></div><div class="abs" style="left:651.19px;top:307.65px;width:2.40px;height:2.40px;background:#5d7d9c;border-radius:50%"></div><div class="abs" style="left:381.900px;top:293.94px;width:5.200px;height:27.11px;background:repeating-linear-gradient(135deg,#1583e0 0,#1583e0 1.900px,transparent 1.900px,transparent 3.300px)"></div><div class="abs" style="left:414.00px;top:453.08px;width:1.40px;height:290.47px;background:#404040;"></div><div class="abs" style="left:435.10px;top:532.30px;width:1.40px;height:26.41px;background:#404040;"></div><div class="abs" style="left:435.10px;top:637.92px;width:1.40px;height:26.41px;background:#404040;"></div><div class="abs" style="left:413.10px;top:321.05px;width:2.90px;height:26.01px;background:#b8b8b8;"></div><div class="ln" style="left:314.6px;top:109.30px;width:60px"><div>1</div><div>2</div><div>3</div><div>4</div><div>5</div><div>6</div><div>7</div><div>8</div><div class="act">9</div><div>10</div><div>11</div><div>12</div><div>13</div><div>14</div><div>15</div><div>16</div><div>17</div><div>18</div><div>19</div><div>20</div><div>21</div><div>22</div><div>23</div><div>24</div><div>25</div><div>26</div></div><div class="code" id="code1" style="left:414.0px;top:109.30px;width:746.0px;overflow:hidden"><div><i class="kw">import</i> <i class="b0">{</i> <i class="var">useEffect</i>, <i class="var">useReducer</i> <i class="b0">}</i> <i class="kw">from</i> <i class="str">"react"</i>;</div><div><i class="kw">import</i> <i class="str">"@patternfly/react−core/dist/styles/base.css"</i>;</div><div><i class="kw">import</i> <i class="str">"@patternfly/patternfly/patternfly−addons.css"</i>;</div><div></div><div><i class="kw">import</i> <i class="b0">{</i> <i class="var">createBrowserRouter</i>, <i class="var">RouterProvider</i> <i class="b0">}</i> <i class="kw">from</i> <i class="str">"react−router−dom"</i>;</div><div></div><div><i class="kw">import</i> <i class="b0">{</i> <i class="var">i18n</i> <i class="b0">}</i> <i class="kw">from</i> <i class="str">"@keycloakify/keycloak−account−ui/i18n"</i>;</div><div><i class="kw">import</i> <i class="b0">{</i> <i class="var">routes</i> <i class="b0">}</i> <i class="kw">from</i> <i class="str">"./routes"</i>;</div><div>      <i style="color:#5c5c5c">You, 5 minutes ago • up</i></div><div><i class="st">const</i> <i class="cst">router</i> = <i class="fn">createBrowserRouter</i><i class="b0">(</i><i class="cst">routes</i><i class="b0">)</i>;</div><div><i class="st">const</i> <i class="cst">prI18nInitialized</i> = <i class="cst">i18n</i>.<i class="fn">init</i><i class="b0">(</i><i class="b0">)</i>;</div><div></div><div><i class="kw">export</i> <i class="kw">default</i> <i class="st">function</i> <i class="fn">KeycloakAccountUi</i><i class="b0">(</i><i class="b0">)</i> <i class="b0">{</i></div><div>  <i class="st">const</i> <i class="b1">[</i><i class="cst">isI18nInitialized</i>, <i class="fn">setI18nInitialized</i><i class="b1">]</i> = <i class="fn">useReducer</i><i class="b1">(</i><i class="b2">(</i><i class="b2">)</i> <i class="st">=&gt;</i> <i class="st">true</i>, <i class="st">false</i><i class="b1">)</i>;</div><div></div><div>  <i class="fn">useEffect</i><i class="b1">(</i><i class="b2">(</i><i class="b2">)</i> <i class="st">=&gt;</i> <i class="b2">{</i></div><div>    <i class="cst">prI18nInitialized</i>.<i class="fn">then</i><i class="b0">(</i><i class="b1">(</i><i class="b1">)</i> <i class="st">=&gt;</i> <i class="fn">setI18nInitialized</i><i class="b1">(</i><i class="b1">)</i><i class="b0">)</i>;</div><div>  <i class="b2">}</i>, <i class="b2">[</i><i class="b2">]</i><i class="b1">)</i>;</div><div></div><div>  <i class="kw">if</i> <i class="b1">(</i>!<i class="cst">isI18nInitialized</i><i class="b1">)</i> <i class="b1">{</i></div><div>    <i class="kw">return</i> <i class="st">null</i>;</div><div>  <i class="b1">}</i></div><div></div><div>  <i class="kw">return</i> <i class="tag">&lt;</i><i class="type">RouterProvider</i> <i class="var">router</i>=<i class="b1">{</i><i class="cst">router</i><i class="b1">}</i> <i class="tag">/&gt;</i>;</div><div><i class="b0">}</i></div><div></div></div><svg class="ic" width="24" height="26" viewBox="0 0 24 26" style="left:415px;top:321.25px"><circle cx="8" cy="7.800" r="6.700" fill="#ffcc00"/><path d="M5.300 13V17.200a2 2 0 0 0 2 2H8.600a2 2 0 0 0 2-2V16" fill="none" stroke="#ffcc00" stroke-width="1.700"/><path d="M15.300 10.700 16.600 14.300 20.200 15.600 16.600 16.900 15.300 20.500 14 16.900 10.400 15.600 14 14.300Z" fill="#ffcc00"/><path d="M18.800 17.400 20.500 19.300 18.800 21.200 17.100 19.300Z" fill="#ffcc00"/></svg><div class="abs" style="left:1154.00px;top:87.00px;width:6.00px;height:1157.00px;background:linear-gradient(90deg,rgba(0,0,0,0),rgba(0,0,0,.22));"></div><div class="abs" style="left:1165.00px;top:104.30px;width:93.00px;height:2.40px;background:#264f78;"></div><div class="abs" style="left:1161.50px;top:104.30px;width:2.00px;height:2.40px;background:#1b81a8;"></div><div class="abs" style="left:1165.0px;top:87.600px;width:93.0px;height:80px;overflow:hidden"><div class="code" style="left:0;top:0;transform-origin:0 0;transform:scale(0.11534,0.09089);opacity:.8;-webkit-text-stroke:1.500px;letter-spacing:-0.207px"><div><i class="kw">import</i> <i class="b0">{</i> <i class="var">useEffect</i>, <i class="var">useReducer</i> <i class="b0">}</i> <i class="kw">from</i> <i class="str">"react"</i>;</div><div><i class="kw">import</i> <i class="str">"@patternfly/react−core/dist/styles/base.css"</i>;</div><div><i class="kw">import</i> <i class="str">"@patternfly/patternfly/patternfly−addons.css"</i>;</div><div></div><div><i class="kw">import</i> <i class="b0">{</i> <i class="var">createBrowserRouter</i>, <i class="var">RouterProvider</i> <i class="b0">}</i> <i class="kw">from</i> <i class="str">"react−router−dom"</i>;</div><div></div><div><i class="kw">import</i> <i class="b0">{</i> <i class="var">i18n</i> <i class="b0">}</i> <i class="kw">from</i> <i class="str">"@keycloakify/keycloak−account−ui/i18n"</i>;</div><div><i class="kw">import</i> <i class="b0">{</i> <i class="var">routes</i> <i class="b0">}</i> <i class="kw">from</i> <i class="str">"./routes"</i>;</div><div></div><div><i class="st">const</i> <i class="cst">router</i> = <i class="fn">createBrowserRouter</i><i class="b0">(</i><i class="cst">routes</i><i class="b0">)</i>;</div><div><i class="st">const</i> <i class="cst">prI18nInitialized</i> = <i class="cst">i18n</i>.<i class="fn">init</i><i class="b0">(</i><i class="b0">)</i>;</div><div></div><div><i class="kw">export</i> <i class="kw">default</i> <i class="st">function</i> <i class="fn">KeycloakAccountUi</i><i class="b0">(</i><i class="b0">)</i> <i class="b0">{</i></div><div>  <i class="st">const</i> <i class="b1">[</i><i class="cst">isI18nInitialized</i>, <i class="fn">setI18nInitialized</i><i class="b1">]</i> = <i class="fn">useReducer</i><i class="b1">(</i><i class="b2">(</i><i class="b2">)</i> <i class="st">=&gt;</i> <i class="st">true</i>, <i class="st">false</i><i class="b1">)</i>;</div><div></div><div>  <i class="fn">useEffect</i><i class="b1">(</i><i class="b2">(</i><i class="b2">)</i> <i class="st">=&gt;</i> <i class="b2">{</i></div><div>    <i class="cst">prI18nInitialized</i>.<i class="fn">then</i><i class="b0">(</i><i class="b1">(</i><i class="b1">)</i> <i class="st">=&gt;</i> <i class="fn">setI18nInitialized</i><i class="b1">(</i><i class="b1">)</i><i class="b0">)</i>;</div><div>  <i class="b2">}</i>, <i class="b2">[</i><i class="b2">]</i><i class="b1">)</i>;</div><div></div><div>  <i class="kw">if</i> <i class="b1">(</i>!<i class="cst">isI18nInitialized</i><i class="b1">)</i> <i class="b1">{</i></div><div>    <i class="kw">return</i> <i class="st">null</i>;</div><div>  <i class="b1">}</i></div><div></div><div>  <i class="kw">return</i> <i class="tag">&lt;</i><i class="type">RouterProvider</i> <i class="var">router</i>=<i class="b1">{</i><i class="cst">router</i><i class="b1">}</i> <i class="tag">/&gt;</i>;</div><div><i class="b0">}</i></div><div></div></div></div><div class="abs" style="left:1258.20px;top:87.00px;width:1.00px;height:1157.00px;background:#1a1a1a;"></div><div class="abs" style="left:1258.60px;top:87.00px;width:20.60px;height:944.80px;background:#424242;"></div><div class="abs" style="left:1258.60px;top:226.50px;width:6.50px;height:16.00px;background:#3a6591;"></div><div class="abs" style="left:1258.60px;top:243.40px;width:20.60px;height:2.20px;background:#a4a4a4;"></div><div class="abs" style="left:1279.20px;top:3.50px;width:1.40px;height:1240.50px;background:#2b2b2b;"></div><div class="abs" style="left:1280.50px;top:3.50px;width:194.00px;height:51.30px;background:#1f1f1f;"></div><div class="abs" style="left:1474.50px;top:3.50px;width:1.00px;height:51.30px;background:#2b2b2b;"></div><svg class="ic" viewBox="0 0 32 32" width="23.47" height="23.47" style="left:1293.77px;top:17.27px"><g fill="none" stroke="#1c8adb" stroke-width="1.35"><ellipse cx="16" cy="16" rx="13.3" ry="5.1"/><ellipse cx="16" cy="16" rx="13.3" ry="5.1" transform="rotate(60 16 16)"/><ellipse cx="16" cy="16" rx="13.3" ry="5.1" transform="rotate(120 16 16)"/></g><circle cx="16" cy="16" r="2.5" fill="#1c8adb"/></svg><span class="t " id="tab3" style="left:1325.30px;top:12.97px;font-size:20.00px;color:#73c991;letter-spacing:0.210px;">routes.tsx</span><span class="t " id="tab3U" style="left:1420.80px;top:13.27px;font-size:17.50px;color:#5fa87c;letter-spacing:0.659px;">U</span><svg class="ic" width="24" height="24" viewBox="-12 -12 24 24" style="left:1442.40px;top:17.60px"><path d="M-6.2 -6.2L6.2 6.2M-6.2 6.2L6.2 -6.2" fill="none" stroke="#9d9d9d" stroke-width="1.50"/></svg><span class="t " id="bc2_src" style="left:1302.30px;top:54.67px;font-size:20.00px;color:#a9a9a9;letter-spacing:0.243px;">src</span><svg class="ic" width="24" height="24" viewBox="-12 -12 24 24" style="left:1329.70px;top:59.50px"><path d="M-3.42 -6.55 L3.42 0.00 L-3.42 6.55" fill="none" stroke="#a9a9a9" stroke-width="1.40" stroke-linejoin="miter"/></svg><span class="t " id="bc2_account" style="left:1352.50px;top:54.67px;font-size:20.00px;color:#a9a9a9;letter-spacing:0.262px;">account</span><svg class="ic" width="24" height="24" viewBox="-12 -12 24 24" style="left:1425.10px;top:59.50px"><path d="M-3.42 -6.55 L3.42 0.00 L-3.42 6.55" fill="none" stroke="#a9a9a9" stroke-width="1.40" stroke-linejoin="miter"/></svg><svg class="ic" viewBox="0 0 32 32" width="23.47" height="23.47" style="left:1447.77px;top:59.27px"><g fill="none" stroke="#1c8adb" stroke-width="1.35"><ellipse cx="16" cy="16" rx="13.3" ry="5.1"/><ellipse cx="16" cy="16" rx="13.3" ry="5.1" transform="rotate(60 16 16)"/><ellipse cx="16" cy="16" rx="13.3" ry="5.1" transform="rotate(120 16 16)"/></g><circle cx="16" cy="16" r="2.5" fill="#1c8adb"/></svg><span class="t " id="bc2_file" style="left:1480.20px;top:54.67px;font-size:20.00px;color:#a9a9a9;letter-spacing:0.190px;">routes.tsx</span><svg class="ic" width="24" height="24" viewBox="-12 -12 24 24" style="left:1568.60px;top:59.50px"><path d="M-3.42 -6.55 L3.42 0.00 L-3.42 6.55" fill="none" stroke="#a9a9a9" stroke-width="1.40" stroke-linejoin="miter"/></svg><svg class="ic" width="24" height="20" viewBox="0 0 24 20" style="left:1592px;top:61.500px"><g fill="none" stroke="#75beff" stroke-width="1.500"><path d="M5.500 3H2.300V17H5.500M18.500 3H21.700V17H18.500"/><path d="M7 9.300 13.500 6.300 17 8.300V11L10.500 14 7 12Z"/><path d="M7 9.300 10.500 11.300V14M10.500 11.300 17 8.300"/></g></svg><span class="t " id="bc2_sym" style="left:1619.20px;top:54.67px;font-size:20.00px;color:#a9a9a9;letter-spacing:-0.134px;">SigningInRoute</span><div class="abs" style="left:1376.00px;top:905.99px;width:928.00px;height:2.00px;background:#2a2a2a;"></div><div class="abs" style="left:1376.00px;top:930.40px;width:928.00px;height:2.00px;background:#2a2a2a;"></div><div class="abs" style="left:1376.00px;top:589.12px;width:1.40px;height:52.81px;background:#404040;"></div><div class="abs" style="left:1376.00px;top:721.15px;width:1.40px;height:52.81px;background:#404040;"></div><div class="abs" style="left:1376.00px;top:853.18px;width:1.40px;height:52.81px;background:#707070;"></div><div class="abs" style="left:1376.00px;top:985.21px;width:1.40px;height:52.81px;background:#404040;"></div><div class="abs" style="left:1376.00px;top:1117.24px;width:1.40px;height:52.81px;background:#404040;"></div><div class="ln" style="left:1277.5px;top:88.50px;width:60px"><div>1</div><div>2</div><div>3</div><div>4</div><div>5</div><div>6</div><div>7</div><div>8</div><div>9</div><div>10</div><div>11</div><div>12</div><div>13</div><div>14</div><div>15</div><div>16</div><div>17</div><div>18</div><div>19</div><div>20</div><div>21</div><div>22</div><div>23</div><div>24</div><div>25</div><div>26</div><div>27</div><div>28</div><div>29</div><div>30</div><div>31</div><div class="act">32</div><div>33</div><div>34</div><div>35</div><div>36</div><div>37</div><div>38</div><div>39</div><div>40</div><div>41</div><div>42</div><div>43</div><div>44</div></div><div class="code" id="code2" style="left:1376.0px;top:88.50px;width:928.0px;overflow:hidden"><div><i class="cmt">/* eslint−disable react−refresh/only−export−components */</i></div><div><i class="kw">import</i> <i class="b0">{</i> <i class="var">lazy</i> <i class="b0">}</i> <i class="kw">from</i> <i class="str">"react"</i>;</div><div><i class="kw">import</i> <i class="kw">type</i> <i class="b0">{</i> <i class="var">IndexRouteObject</i>, <i class="var">RouteObject</i> <i class="b0">}</i> <i class="kw">from</i> <i class="str">"react−router−dom"</i>;</div><div></div><div><i class="kw">import</i> <i class="b0">{</i> <i class="var">environment</i> <i class="b0">}</i> <i class="kw">from</i> <i class="str">"@keycloakify/keycloak−account−ui/environment"</i>;</div><div><i class="kw">import</i> <i class="b0">{</i> <i class="var">ErrorPage</i> <i class="b0">}</i> <i class="kw">from</i> <i class="str">"@keycloakify/keycloak−account−ui/root/ErrorPage"</i>;</div><div><i class="kw">import</i> <i class="b0">{</i> <i class="var">Root</i> <i class="b0">}</i> <i class="kw">from</i> <i class="str">"@keycloakify/keycloak−account−ui/root/Root"</i>;</div><div></div><div><i class="st">const</i> <i class="cst">DeviceActivity</i> = <i class="fn">lazy</i><i class="b0">(</i><i class="b1">(</i><i class="b1">)</i> <i class="st">=&gt;</i> <i class="st">import</i><i class="b1">(</i><i class="str">"@keycloakify/keycloak−account−ui/account−security/DeviceActivity"</i><i class="b1">)</i><i class="b0">)</i>;</div><div><i class="st">const</i> <i class="cst">LinkedAccounts</i> = <i class="fn">lazy</i><i class="b0">(</i><i class="b1">(</i><i class="b1">)</i> <i class="st">=&gt;</i> <i class="st">import</i><i class="b1">(</i><i class="str">"@keycloakify/keycloak−account−ui/account−security/LinkedAccounts"</i><i class="b1">)</i><i class="b0">)</i>;</div><div><i class="st">const</i> <i class="cst">SigningIn</i> = <i class="fn">lazy</i><i class="b0">(</i><i class="b1">(</i><i class="b1">)</i> <i class="st">=&gt;</i> <i class="st">import</i><i class="b1">(</i><i class="str">"@keycloakify/keycloak−account−ui/account−security/SigningIn"</i><i class="b1">)</i><i class="b0">)</i>;</div><div><i class="st">const</i> <i class="cst">Applications</i> = <i class="fn">lazy</i><i class="b0">(</i><i class="b1">(</i><i class="b1">)</i> <i class="st">=&gt;</i> <i class="st">import</i><i class="b1">(</i><i class="str">"@keycloakify/keycloak−account−ui/applications/Applications"</i><i class="b1">)</i><i class="b0">)</i>;</div><div><i class="st">const</i> <i class="cst">Groups</i> = <i class="fn">lazy</i><i class="b0">(</i><i class="b1">(</i><i class="b1">)</i> <i class="st">=&gt;</i> <i class="st">import</i><i class="b1">(</i><i class="str">"@keycloakify/keycloak−account−ui/groups/Groups"</i><i class="b1">)</i><i class="b0">)</i>;</div><div><i class="st">const</i> <i class="cst">PersonalInfo</i> = <i class="fn">lazy</i><i class="b0">(</i><i class="b1">(</i><i class="b1">)</i> <i class="st">=&gt;</i> <i class="st">import</i><i class="b1">(</i><i class="str">"@keycloakify/keycloak−account−ui/personal−info/PersonalInfo"</i><i class="b1">)</i><i class="b0">)</i>;</div><div><i class="st">const</i> <i class="cst">Resources</i> = <i class="fn">lazy</i><i class="b0">(</i><i class="b1">(</i><i class="b1">)</i> <i class="st">=&gt;</i> <i class="st">import</i><i class="b1">(</i><i class="str">"@keycloakify/keycloak−account−ui/resources/Resources"</i><i class="b1">)</i><i class="b0">)</i>;</div><div><i class="st">const</i> <i class="cst">ContentComponent</i> = <i class="fn">lazy</i><i class="b0">(</i><i class="b1">(</i><i class="b1">)</i> <i class="st">=&gt;</i> <i class="st">import</i><i class="b1">(</i><i class="str">"@keycloakify/keycloak−account−ui/content/ContentComponent"</i><i class="b1">)</i><i class="b0">)</i>;</div><div><i class="st">const</i> <i class="cst">Oid4Vci</i> = <i class="fn">lazy</i><i class="b0">(</i><i class="b1">(</i><i class="b1">)</i> <i class="st">=&gt;</i> <i class="st">import</i><i class="b1">(</i><i class="str">"@keycloakify/keycloak−account−ui/oid4vci/Oid4Vci"</i><i class="b1">)</i><i class="b0">)</i>;</div><div></div><div><i class="kw">export</i> <i class="st">const</i> <i class="cst">DeviceActivityRoute</i>: <i class="type">RouteObject</i> = <i class="b0">{</i></div><div>  <i class="var">path</i>: <i class="str">"account−security/device−activity"</i>,</div><div>  <i class="var">element</i>: <i class="tag">&lt;</i><i class="type">DeviceActivity</i> <i class="tag">/&gt;</i>,</div><div><i class="b0">}</i>;</div><div></div><div><i class="kw">export</i> <i class="st">const</i> <i class="cst">LinkedAccountsRoute</i>: <i class="type">RouteObject</i> = <i class="b0">{</i></div><div>  <i class="var">path</i>: <i class="str">"account−security/linked−accounts"</i>,</div><div>  <i class="var">element</i>: <i class="tag">&lt;</i><i class="type">LinkedAccounts</i> <i class="tag">/&gt;</i>,</div><div><i class="b0">}</i>;</div><div></div><div><i class="kw">export</i> <i class="st">const</i> <i class="cst">SigningInRoute</i>: <i class="type">RouteObject</i> = <i class="b0">{</i></div><div>  <i class="var">path</i>: <i class="str">"account−security/signing−in"</i>,</div><div>  <i class="var">element</i>: <i class="tag">&lt;</i><i class="type">SigningIn</i> <i class="tag">/&gt;</i>,</div><div><i class="b0">}</i>;</div><div></div><div><i class="kw">export</i> <i class="st">const</i> <i class="cst">ApplicationsRoute</i>: <i class="type">RouteObject</i> = <i class="b0">{</i></div><div>  <i class="var">path</i>: <i class="str">"applications"</i>,</div><div>  <i class="var">element</i>: <i class="tag">&lt;</i><i class="type">Applications</i> <i class="tag">/&gt;</i>,</div><div><i class="b0">}</i>;</div><div></div><div><i class="kw">export</i> <i class="st">const</i> <i class="cst">GroupsRoute</i>: <i class="type">RouteObject</i> = <i class="b0">{</i></div><div>  <i class="var">path</i>: <i class="str">"groups"</i>,</div><div>  <i class="var">element</i>: <i class="tag">&lt;</i><i class="type">Groups</i> <i class="tag">/&gt;</i>,</div><div><i class="b0">}</i>;</div><div></div><div><i class="kw">export</i> <i class="st">const</i> <i class="cst">ResourcesRoute</i>: <i class="type">RouteObject</i> = <i class="b0">{</i></div></div><svg class="ic" width="18" height="24" viewBox="0 0 18 24" style="left:1378.500px;top:879.7px"><circle cx="8.600" cy="8.300" r="7.100" fill="#ffcc00"/><path d="M5.300 13H11.900V18.700a1.400 1.400 0 0 1-1.400 1.400H6.700A1.400 1.400 0 0 1 5.300 18.700Z" fill="#ffcc00"/><rect x="7.200" y="15.200" width="2.800" height="2.600" fill="#1f1f1f"/></svg></div></body></html>
